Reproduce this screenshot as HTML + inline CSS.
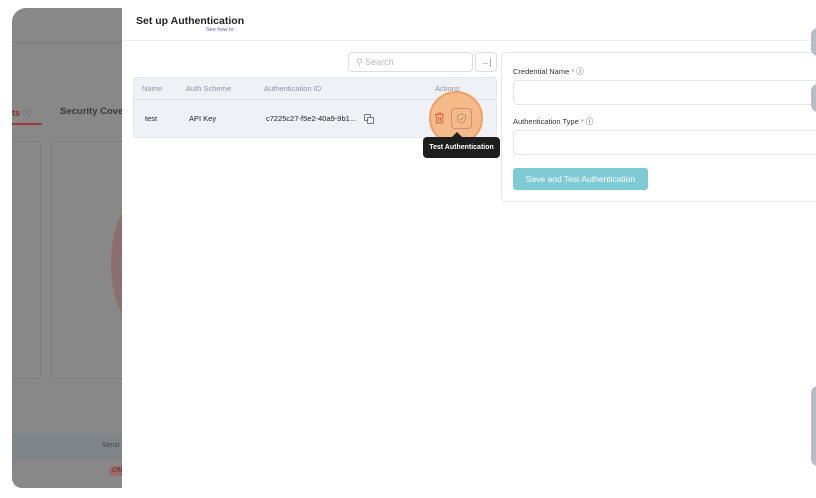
<!DOCTYPE html>
<html><head><meta charset="utf-8"><style>
*{box-sizing:border-box;margin:0;padding:0}
body{width:816px;height:498px;background:#fff;position:relative;overflow:hidden;font-family:"Liberation Sans",sans-serif;}
.bg{position:absolute;left:12px;top:8px;width:130px;height:480px;background:#888;border-radius:14px 0 0 10px;overflow:hidden}
.abs{position:absolute}
.modal{position:absolute;left:122px;top:8px;width:694px;height:480px;background:#fff}
</style></head><body>
<div class="bg">
 <div class="abs" style="left:0;top:34px;width:130px;height:1px;background:#7a7a7a"></div>
 <div class="abs" style="left:0;top:98px;font-size:9px;color:#8e2a2a;font-weight:bold">ts<span style="color:#555;font-weight:normal"> ⓘ</span></div>
 <div class="abs" style="left:48px;top:98px;font-size:9.5px;color:#3a3a3a;font-weight:bold;white-space:nowrap">Security Cover</div>
 <div class="abs" style="left:0;top:115px;width:30px;height:2px;background:#9c3a3a"></div>
 <div class="abs" style="top:133px;width:31px;height:238px;border:1px solid #7d7d7d;border-radius:3px;left:-2px"></div>
 <div class="abs" style="left:39px;top:133px;width:100px;height:238px;border:1px solid #7d7d7d;border-radius:3px"></div>
 <div class="abs" style="left:99px;top:190px;width:60px;height:130px;border-radius:50%;background:#8d6f6f"></div>
 <div class="abs" style="left:0;top:426px;width:130px;height:26px;background:#80858a"></div>
 <div class="abs" style="left:90px;top:434px;font-size:7px;color:#444">Sensi</div>
 <div class="abs" style="left:97px;top:458px;width:20px;height:10px;border-radius:5px;background:#9e6a66;font-size:6px;color:#5a2020;padding:2px 3px">CRI</div>
</div>
<div class="modal">
 <div class="abs" style="left:14px;top:7px;font-size:10.5px;font-weight:bold;color:#222">Set up Authentication</div>
 <div class="abs" style="left:84px;top:19px;font-size:5.5px;color:#5a5ad0">See how to</div>
 <div class="abs" style="left:0;top:32px;width:694px;height:1px;background:#eee"></div>
 <div class="abs" style="left:226px;top:44px;width:125px;height:20px;border:1px solid #ddd;border-radius:4px;font-size:9px;color:#bbb;padding:4px 7px">⚲ Search</div>
 <div class="abs" style="left:353px;top:44px;width:22px;height:20px;border:1px solid #ddd;border-radius:4px;font-size:9px;color:#888;text-align:center;line-height:18px">→|</div>
 <div class="abs" style="left:11px;top:69px;width:364px;height:61px;background:#eef2f7;border-radius:4px;border:1px solid #e4e8ee"></div>
 <div class="abs" style="left:11px;top:91px;width:364px;height:1px;background:#dde2e8"></div>
 <div class="abs" style="top:76px;left:20px;font-size:7.5px;color:#8a94a4">Name</div>
 <div class="abs" style="top:76px;left:64px;font-size:7.5px;color:#8a94a4">Auth Scheme</div>
 <div class="abs" style="top:76px;left:142px;font-size:7.5px;color:#8a94a4">Authentication ID</div>
 <div class="abs" style="top:76px;left:313px;font-size:7.5px;color:#8a94a4">Actions</div>
 <div class="abs" style="top:106px;left:23px;font-size:7.5px;color:#222">test</div>
 <div class="abs" style="top:106px;left:67px;font-size:7.5px;color:#222">API Key</div>
 <div class="abs" style="top:106px;left:144px;font-size:7.5px;color:#222">c7225c27-f5e2-40a9-9b1...</div>
 <div class="abs" style="top:106px;left:242px;width:7px;height:7px;border:1px solid #777;border-radius:1px"></div>
 <div class="abs" style="top:109px;left:245px;width:7px;height:7px;border:1px solid #777;border-radius:1px;background:#eef2f7"></div>
 <div class="abs" style="left:307px;top:83px;width:54px;height:54px;border-radius:50%;background:#f5ba8a;border:2px solid #f0a060"></div>
 <svg class="abs" style="left:312px;top:104px" width="11" height="12" viewBox="0 0 11 12"><path d="M1 2.5h9M4 2.5V1h3v1.5M2 2.5l.7 8.5h5.6L9 2.5M4.5 5v4M6.5 5v4" fill="none" stroke="#e8603c" stroke-width="1"/></svg>
 <div class="abs" style="left:329px;top:100px;width:21px;height:21px;border:1px solid #c9907a;border-radius:4px"></div>
 <svg class="abs" style="left:334px;top:105px" width="11" height="11" viewBox="0 0 11 11"><path d="M5.5 1L9.5 2.5v3c0 2.3-1.8 3.8-4 4.5-2.2-.7-4-2.2-4-4.5v-3z M3.8 5.5l1.2 1.2 2.2-2.2" fill="none" stroke="#b89070" stroke-width=".9"/></svg>
 <div class="abs" style="left:330px;top:124px;width:0;height:0;border-left:5px solid transparent;border-right:5px solid transparent;border-bottom:5px solid #1e1e1e"></div>
 <div class="abs" style="left:301px;top:129px;width:77px;height:21px;background:#1e1e1e;border-radius:4px;color:#fff;font-size:7px;font-weight:bold;text-align:center;line-height:21px">Test Authentication</div>
 <div class="abs" style="left:379px;top:44px;width:330px;height:150px;border:1px solid #e6e6e6;border-radius:4px"></div>
 <div class="abs" style="left:391px;top:58px;font-size:7.5px;color:#333">Credential Name <span style="color:#e55">*</span> ⓘ</div>
 <div class="abs" style="left:391px;top:72px;width:320px;height:25px;border:1px solid #e6e6e6;border-radius:4px"></div>
 <div class="abs" style="left:391px;top:108px;font-size:7.5px;color:#333">Authentication Type <span style="color:#e55">*</span> ⓘ</div>
 <div class="abs" style="left:391px;top:122px;width:320px;height:25px;border:1px solid #e6e6e6;border-radius:4px"></div>
 <div class="abs" style="left:391px;top:160px;width:135px;height:22px;background:#7ecbd6;border-radius:3px;color:#fff;font-size:8.5px;text-align:center;line-height:22px">Save and Test Authentication</div>
</div>
<div class="abs" style="left:811px;top:28px;width:14px;height:28px;border-radius:7px;background:#b8bcc4"></div>
<div class="abs" style="left:811px;top:84px;width:14px;height:28px;border-radius:7px;background:#b8bcc4"></div>
<div class="abs" style="left:811px;top:386px;width:14px;height:80px;border-radius:7px;background:#b8bcc4"></div>
</body></html>
